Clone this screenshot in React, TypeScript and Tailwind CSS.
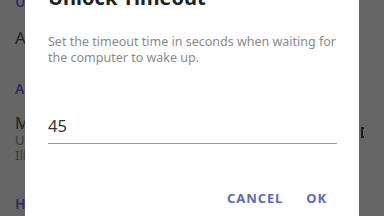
import React from 'react';

const font = { fontFamily: '"Noto Sans", "Open Sans", sans-serif' };

export default function App() {
  return (
    <div className="relative w-[384px] h-[216px] overflow-hidden bg-[#666666]" style={font}>
      {/* dimmed settings list behind the dialog */}
      <div className="flex flex-col pl-[15px] text-[#222222]">
        <div className="mt-[-9px] text-[14px] font-semibold text-[#2a2a6e]">Unlock</div>
        <div className="mt-[16px] text-[17px] leading-[20px]">Auto</div>
        <div className="mt-[30px] text-[14px] font-semibold text-[#2a2a6e]">Advanced</div>
        <div className="mt-[14px] text-[16px] leading-[20px]">Mode</div>
        <div className="text-[13px] leading-[15px] text-[#3a3a3a]">Use</div>
        <div className="text-[13px] leading-[15px] text-[#3a3a3a]">Ill</div>
        <div className="mt-[30px] text-[14px] font-semibold text-[#2a2a6e]">Help</div>
      </div>
      <div className="absolute left-[361px] top-[127px] w-[3px] h-[11px] border-2 border-r-0 border-[#1e1e1e] rounded-l-[1px]" />

      {/* dialog */}
      <div className="absolute left-[25px] top-[-20px] w-[334px] h-[260px] bg-white flex flex-col pl-[23px] pr-[23px]">
        <div className="mt-[6px] text-[20px] font-bold leading-[24px] text-[#202020]">Unlock Timeout</div>
        <div className="mt-[24px] text-[12.5px] leading-[16px] text-[#8a8a8a]">
          Set the timeout time in seconds when waiting for the computer to wake up.
        </div>
        <div className="mt-[49px] w-[289px] border-b-[1.5px] border-[#9a9a9a] pb-[6px] text-[16.5px] leading-[22px] text-[#333333]">45</div>
        <div className="mt-[45px] flex justify-end gap-[23px] pr-[9px] text-[13px] font-bold tracking-[0.9px] text-[#5c6bc0]">
          <span>CANCEL</span>
          <span>OK</span>
        </div>
      </div>
    </div>
  );
}
